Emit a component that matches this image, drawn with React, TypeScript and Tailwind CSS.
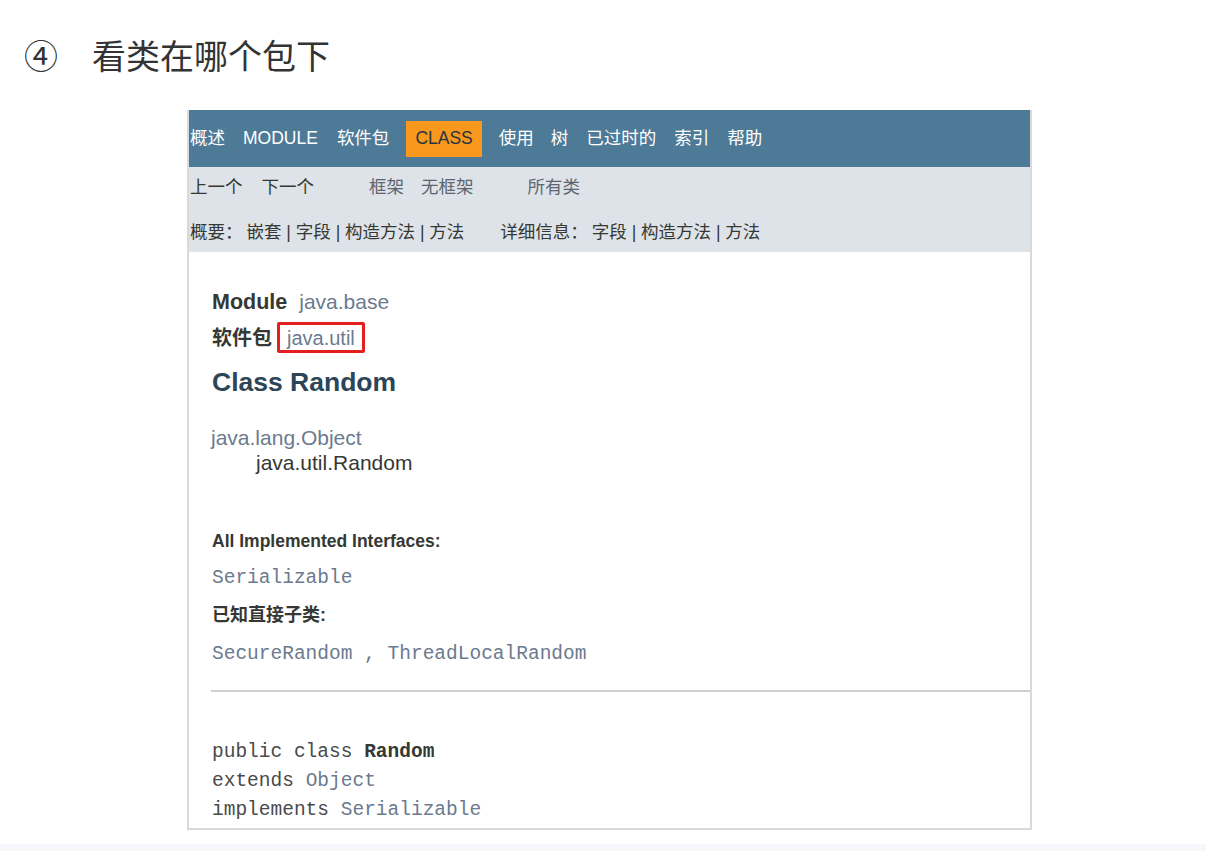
import React from "react";

const sans = { fontFamily: '"Liberation Sans", Arial, "Noto Sans CJK SC", sans-serif' };
const mono = { fontFamily: '"Liberation Mono", "Courier New", monospace' };

function NavBar() {
  return (
    <div className="h-[57px] bg-[#4d7a97] flex items-center pl-[1px] text-[17.5px] text-white">
      <span>概述</span>
      <span className="ml-[18px]">MODULE</span>
      <span className="ml-[19px]">软件包</span>
      <span className="ml-[17px] h-[36px] px-[9px] flex items-center bg-[#f8981d] text-[#253441]">CLASS</span>
      <span className="ml-[17px]">使用</span>
      <span className="ml-[17px]">树</span>
      <span className="ml-[18px]">已过时的</span>
      <span className="ml-[18px]">索引</span>
      <span className="ml-[18px]">帮助</span>
    </div>
  );
}

function SubNav() {
  return (
    <div className="h-[85px] bg-[#dee3e9] pt-[8px] pl-[1px] text-[17.5px] text-[#353833]">
      <div className="h-[24px] leading-[24px] flex">
        <span>上一个</span>
        <span className="ml-[19px]">下一个</span>
        <span className="ml-[55px] text-[#5d6670]">框架</span>
        <span className="ml-[17px] text-[#5d6670]">无框架</span>
        <span className="ml-[54px] text-[#5d6670]">所有类</span>
      </div>
      <div className="h-[24px] leading-[24px] mt-[21px] flex whitespace-pre">
        <span>概要：</span>
        <span className="ml-[4px]">嵌套 | 字段 | 构造方法 | 方法</span>
        <span className="ml-[36px]">详细信息：</span>
        <span className="ml-[4px]">字段 | 构造方法 | 方法</span>
      </div>
    </div>
  );
}

export default function App() {
  return (
    <div className="h-[851px] bg-white flex flex-col overflow-hidden" style={sans}>
      <div className="h-[40px] mt-[35px] ml-[24px] flex items-center text-[34px] text-[#333] leading-[40px]" style={{ fontFamily: '"Noto Sans CJK SC", sans-serif' }}>
        <span>④</span>
        <span className="ml-[34px]">看类在哪个包下</span>
      </div>

      <div className="ml-[187px] mt-[35px] w-[845px] border-x-2 border-b-2 border-[#d9d9d9]">
        <NavBar />
        <SubNav />

        <div className="pt-[36px] pb-[3px]">
          <div className="pl-[23px]">
            <div className="h-[28px] leading-[28px] text-[21.5px]">
              <span className="font-bold text-[#353833]">Module</span>
              <span className="ml-[12px] text-[21px] text-[#6b7a8e]">java.base</span>
            </div>
            <div className="mt-[6px] h-[31px] flex items-center text-[20px]">
              <span className="font-bold text-[#353833]">软件包</span>
              <span className="ml-[5px] h-[31px] px-[7px] flex items-center border-[3px] border-[#e3201d] rounded-[2px] text-[#6b7a8e]">
                java.util
              </span>
            </div>
            <div className="mt-[12px] h-[34px] leading-[34px] text-[26.5px] font-bold text-[#2c4557]">
              Class Random
            </div>
            <div className="mt-[26px] h-[25px] leading-[25px] text-[21px] -ml-[1px] text-[#6b7a8e]">
              java.lang.Object
            </div>
            <div className="h-[25px] leading-[25px] text-[21px] ml-[44px] text-[#353833]">
              java.util.Random
            </div>
            <div className="mt-[54px] h-[24px] leading-[24px] text-[17.5px] font-bold text-[#353833]">
              All Implemented Interfaces:
            </div>
            <div className="mt-[11px] h-[28px] leading-[28px] text-[19.5px] text-[#6b7a8e]" style={mono}>
              Serializable
            </div>
            <div className="mt-[11px] h-[24px] leading-[24px] text-[18px] font-bold text-[#353833]">
              已知直接子类:
            </div>
            <div className="mt-[13px] h-[28px] leading-[28px] text-[19.5px] text-[#6b7a8e] whitespace-pre" style={mono}>
              SecureRandom , ThreadLocalRandom
            </div>
          </div>

          <div className="mt-[22px] ml-[22px] h-[2px] bg-[#cfcfcf]" />

          <div className="pl-[23px] mt-[46px] text-[19.5px] leading-[29px] text-[#4a4a4a] whitespace-pre" style={mono}>
            <div>
              public class <span className="font-bold text-[#353833]">Random</span>
            </div>
            <div>
              extends <span className="text-[#6b7a8e]">Object</span>
            </div>
            <div>
              implements <span className="text-[#6b7a8e]">Serializable</span>
            </div>
          </div>
        </div>
      </div>

      <div className="flex-1" />
      <div className="h-[7px] bg-[#f7f8fc]" />
    </div>
  );
}
